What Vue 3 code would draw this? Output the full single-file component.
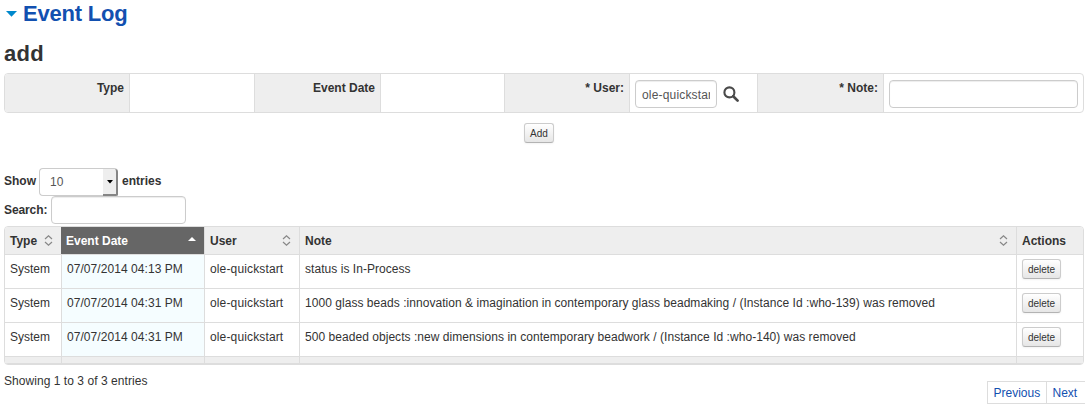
<script setup>
import { ref } from 'vue'

const user = ref('ole-quickstart')
const note = ref('')
const search = ref('')

const rows = [
  { type: 'System', date: '07/07/2014 04:13 PM', user: 'ole-quickstart', note: 'status is In-Process' },
  { type: 'System', date: '07/07/2014 04:31 PM', user: 'ole-quickstart', note: '1000 glass beads :innovation & imagination in contemporary glass beadmaking / (Instance Id :who-139) was removed' },
  { type: 'System', date: '07/07/2014 04:31 PM', user: 'ole-quickstart', note: '500 beaded objects :new dimensions in contemporary beadwork / (Instance Id :who-140) was removed' },
]
</script>

<template>
  <main class="page">
    <h2 class="title">
      <svg class="caret" width="11" height="6" viewBox="0 0 11 6"><path d="M0 0H11L5.5 5.8Z" fill="#0088cc" /></svg>
      <span>Event Log</span>
    </h2>
    <h3 class="subtitle">add</h3>

    <div class="form">
      <div class="label">Type</div>
      <div class="field"></div>
      <div class="label">Event Date</div>
      <div class="field"></div>
      <div class="label">* User:</div>
      <div class="field">
        <input v-model="user" class="input user" type="text" />
        <svg class="lookup" width="17" height="17" viewBox="0 0 17 17" fill="none" stroke="#4a4a4a">
          <circle cx="6.4" cy="6.4" r="5" stroke-width="2.1" />
          <path d="M10.2 10.2L14.6 14.6" stroke-width="2.7" stroke-linecap="round" />
        </svg>
      </div>
      <div class="label">* Note:</div>
      <div class="field"><input v-model="note" class="input note" type="text" /></div>
    </div>

    <div class="add-row"><button class="btn add">Add</button></div>

    <div class="length">
      <span>Show</span>
      <div class="select">
        <span>10</span>
        <i class="arrow"><svg width="6" height="4" viewBox="0 0 6 4"><path d="M0 0H6L3 3.6Z" fill="#000" /></svg></i>
      </div>
      <span>entries</span>
    </div>
    <div class="filter">
      <span>Search:</span>
      <input v-model="search" class="input search" type="text" />
    </div>

    <div class="table">
      <div class="row head">
        <div class="cell"><span>Type</span><svg class="sort" width="9" height="11" viewBox="0 0 9 11"><path d="M1 4L4.5 .8L8 4M1 7L4.5 10.2L8 7" /></svg></div>
        <div class="cell sorted"><span>Event Date</span><svg class="asc" width="8" height="4" viewBox="0 0 8 4"><path d="M0 4L4 0L8 4Z" fill="#fff" /></svg></div>
        <div class="cell"><span>User</span><svg class="sort" width="9" height="11" viewBox="0 0 9 11"><path d="M1 4L4.5 .8L8 4M1 7L4.5 10.2L8 7" /></svg></div>
        <div class="cell"><span>Note</span><svg class="sort" width="9" height="11" viewBox="0 0 9 11"><path d="M1 4L4.5 .8L8 4M1 7L4.5 10.2L8 7" /></svg></div>
        <div class="cell"><span>Actions</span></div>
      </div>
      <div v-for="(row, i) in rows" :key="i" class="row body">
        <div class="cell">{{ row.type }}</div>
        <div class="cell date">{{ row.date }}</div>
        <div class="cell name">{{ row.user }}</div>
        <div class="cell message">{{ row.note }}</div>
        <div class="cell"><button class="btn">delete</button></div>
      </div>
      <div class="row foot">
        <div v-for="n in 5" :key="n" class="cell"></div>
      </div>
    </div>

    <div class="bottom">
      <div class="info">Showing 1 to 3 of 3 entries</div>
      <div class="pager"><a class="prev">Previous</a><a class="next">Next</a></div>
    </div>
  </main>
</template>

<style>
body {
  background: #fff;
}
</style>

<style scoped>
.page {
  box-sizing: border-box;
  width: 1085px;
  height: 407px;
  padding: 0 1px 0 4px;
  overflow: hidden;
  font: 12px/18px "Liberation Sans", Arial, sans-serif;
  color: #333;
}
.page * {
  box-sizing: border-box;
}
.title,
.subtitle {
  margin: 0;
  font-size: 22px;
  line-height: 28px;
  font-weight: bold;
}
.title {
  display: flex;
  align-items: center;
  height: 28px;
  padding-left: 2px;
  gap: 6px;
  color: #1250b0;
  letter-spacing: -0.2px;
}
.subtitle {
  height: 33px;
  margin-top: 12px;
  letter-spacing: 0.3px;
}
.form {
  display: grid;
  grid-template-columns: 124px 126px 125px 125px 124px 129px 125px 200px;
  height: 40px;
  border: 1px solid #ddd;
  border-radius: 4px;
  overflow: hidden;
}
.label {
  padding: 5px 5px 0 0;
  background: #eee;
  text-align: right;
  font-weight: bold;
}
.field {
  display: flex;
  padding: 6px 0 0 5px;
  border: solid #ddd;
  border-width: 0 1px;
}
.field:last-child {
  border-right: 0;
}
.input {
  height: 28px;
  margin: 0;
  padding: 4px 6px;
  border: 1px solid #ccc;
  border-radius: 4px;
  background: #fff;
  box-shadow: inset 0 1px 1px rgba(0, 0, 0, 0.075);
  font: 12px/18px "Liberation Sans", Arial, sans-serif;
  color: #555;
  outline: 0;
}
.user {
  width: 82px;
  padding-top: 5px;
  letter-spacing: 0.17px;
}
.note {
  width: 189px;
}
.lookup {
  margin: 6px 0 0 6px;
}
.add-row {
  display: flex;
  justify-content: center;
  height: 55px;
  padding-top: 10px;
  padding-right: 10px;
}
.btn {
  width: 39px;
  height: 20px;
  padding: 0;
  border: 1px solid #ccc;
  border-bottom-color: #b3b3b3;
  border-radius: 3px;
  background: linear-gradient(#fff, #e6e6e6);
  box-shadow: 0 1px 2px rgba(0, 0, 0, 0.05);
  font: 10px/17px "Liberation Sans", Arial, sans-serif;
  color: #333;
}
.add {
  width: 30px;
}
.length,
.filter {
  display: flex;
  height: 28px;
  font-weight: bold;
}
.length > span {
  padding-top: 4px;
}
.filter > span {
  width: 47px;
  padding-top: 5px;
  letter-spacing: -0.1px;
}
.length > span:first-child {
  width: 35px;
}
.length > span:last-child {
  margin-left: 4px;
}
.select {
  display: flex;
  justify-content: space-between;
  width: 79px;
  border: 1px solid #ccc;
  border-right: 0;
  border-radius: 4px;
  padding-left: 10px;
  font-weight: normal;
  line-height: 27px;
  color: #555;
}
.arrow {
  display: flex;
  align-items: center;
  justify-content: center;
  width: 15px;
  height: 27px;
  margin-bottom: -1px;
  border: solid #858585;
  border-width: 0 2px 2px 0;
  border-radius: 0 3px 2px 0;
  background: #eee;
}
.search {
  width: 135px;
}
.table {
  margin-top: 2px;
  border: 1px solid #ddd;
  border-radius: 4px;
  overflow: hidden;
}
.row {
  display: grid;
  grid-template-columns: 56px 143px 95px 717px 67px;
  height: 34px;
  border-top: 1px solid #ddd;
}
.head {
  height: 27px;
  border-top: 0;
  background: #eee;
  font-weight: bold;
}
.head .cell {
  display: flex;
  justify-content: space-between;
  padding-top: 5px;
  padding-right: 8px;
}
.head .sort {
  margin-top: 3px;
}
.sort path {
  fill: none;
  stroke: #888;
  stroke-width: 1.2;
}
.cell {
  padding: 5px 0 0 5px;
  border-left: 1px solid #ddd;
  white-space: nowrap;
}
.cell:first-child {
  border-left: 0;
}
.head .sorted {
  background: #666;
  border-color: #666;
  color: #fff;
  padding-left: 4px;
}
.asc {
  margin-top: 5px;
}
.date {
  background: #f5fdff;
  letter-spacing: 0.06px;
}
.name {
  letter-spacing: 0.14px;
}
.message {
  letter-spacing: 0.045px;
}
.body .btn {
  display: block;
  margin-top: -1px;
}
.foot {
  height: 8px;
  background: #eee;
  border-bottom: 1px solid #ddd;
}
.bottom {
  display: flex;
  justify-content: space-between;
  height: 42px;
}
.info {
  padding-top: 7px;
  letter-spacing: 0.05px;
}
.pager {
  display: flex;
  margin-top: 16px;
  margin-right: -1px;
  height: 23px;
  border: 1px solid #ddd;
  border-right: 0;
  line-height: 22px;
  color: #1250b0;
}
.prev {
  width: 59px;
  padding-left: 5.5px;
  border-right: 1px solid #ddd;
}
.next {
  width: 38px;
  padding-left: 5.5px;
}
</style>
